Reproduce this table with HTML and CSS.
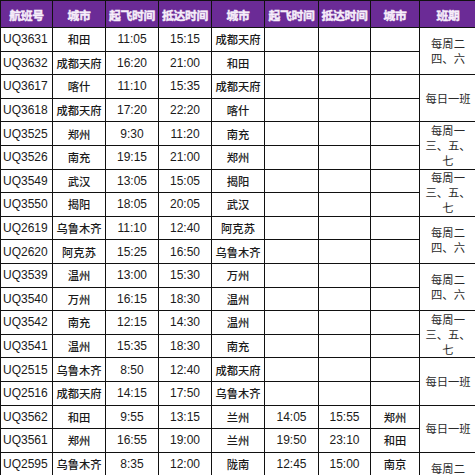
FILE: index.html
```html
<!DOCTYPE html>
<html lang="zh">
<head>
<meta charset="utf-8">
<title>航班时刻表</title>
<link rel="stylesheet" href="styles.css">
</head>
<body>
<table class="sched">
  <colgroup>
    <col class="c-no"><col class="c-city"><col class="c-t"><col class="c-t"><col class="c-city">
    <col class="c-t2"><col class="c-t3"><col class="c-city3"><col class="c-per">
  </colgroup>
  <thead>
    <tr class="head">
      <th>航班号</th><th>城市</th><th>起飞时间</th><th>抵达时间</th><th>城市</th><th>起飞时间</th><th>抵达时间</th><th>城市</th><th>班期</th>
    </tr>
  </thead>
  <tbody>
    <tr><td class="no">UQ3631</td><td class="cn">和田</td><td>11:05</td><td>15:15</td><td class="cn">成都天府</td><td></td><td></td><td></td><td class="per" rowspan="2">每周二<br>四、六</td></tr>
    <tr><td class="no">UQ3632</td><td class="cn">成都天府</td><td>16:20</td><td>21:00</td><td class="cn">和田</td><td></td><td></td><td></td></tr>
    <tr><td class="no">UQ3617</td><td class="cn">喀什</td><td>11:10</td><td>15:35</td><td class="cn">成都天府</td><td></td><td></td><td></td><td class="per" rowspan="2">每日一班</td></tr>
    <tr><td class="no">UQ3618</td><td class="cn">成都天府</td><td>17:20</td><td>22:20</td><td class="cn">喀什</td><td></td><td></td><td></td></tr>
    <tr><td class="no">UQ3525</td><td class="cn">郑州</td><td>9:30</td><td>11:20</td><td class="cn">南充</td><td></td><td></td><td></td><td class="per" rowspan="2">每周一<br>三、五、<br>七</td></tr>
    <tr><td class="no">UQ3526</td><td class="cn">南充</td><td>19:15</td><td>21:00</td><td class="cn">郑州</td><td></td><td></td><td></td></tr>
    <tr><td class="no">UQ3549</td><td class="cn">武汉</td><td>13:05</td><td>15:05</td><td class="cn">揭阳</td><td></td><td></td><td></td><td class="per" rowspan="2">每周一<br>三、五、<br>七</td></tr>
    <tr><td class="no">UQ3550</td><td class="cn">揭阳</td><td>18:05</td><td>20:05</td><td class="cn">武汉</td><td></td><td></td><td></td></tr>
    <tr><td class="no">UQ2619</td><td class="cn">乌鲁木齐</td><td>11:10</td><td>12:40</td><td class="cn">阿克苏</td><td></td><td></td><td></td><td class="per" rowspan="2">每周二<br>四、六</td></tr>
    <tr><td class="no">UQ2620</td><td class="cn">阿克苏</td><td>15:25</td><td>16:50</td><td class="cn">乌鲁木齐</td><td></td><td></td><td></td></tr>
    <tr><td class="no">UQ3539</td><td class="cn">温州</td><td>13:00</td><td>15:30</td><td class="cn">万州</td><td></td><td></td><td></td><td class="per" rowspan="2">每周二<br>四、六</td></tr>
    <tr><td class="no">UQ3540</td><td class="cn">万州</td><td>16:15</td><td>18:30</td><td class="cn">温州</td><td></td><td></td><td></td></tr>
    <tr><td class="no">UQ3542</td><td class="cn">南充</td><td>12:15</td><td>14:30</td><td class="cn">温州</td><td></td><td></td><td></td><td class="per" rowspan="2">每周一<br>三、五、<br>七</td></tr>
    <tr><td class="no">UQ3541</td><td class="cn">温州</td><td>15:35</td><td>18:30</td><td class="cn">南充</td><td></td><td></td><td></td></tr>
    <tr><td class="no">UQ2515</td><td class="cn">乌鲁木齐</td><td>8:50</td><td>12:40</td><td class="cn">成都天府</td><td></td><td></td><td></td><td class="per" rowspan="2">每日一班</td></tr>
    <tr><td class="no">UQ2516</td><td class="cn">成都天府</td><td>14:15</td><td>17:50</td><td class="cn">乌鲁木齐</td><td></td><td></td><td></td></tr>
    <tr><td class="no">UQ3562</td><td class="cn">和田</td><td>9:55</td><td>13:15</td><td class="cn">兰州</td><td>14:05</td><td>15:55</td><td class="cn">郑州</td><td class="per" rowspan="2">每日一班</td></tr>
    <tr><td class="no">UQ3561</td><td class="cn">郑州</td><td>16:55</td><td>19:00</td><td class="cn">兰州</td><td>19:50</td><td>23:10</td><td class="cn">和田</td></tr>
    <tr><td class="no">UQ2595</td><td class="cn">乌鲁木齐</td><td>8:35</td><td>12:00</td><td class="cn">陇南</td><td>12:45</td><td>15:00</td><td class="cn">南京</td><td class="per" rowspan="2">每周二<br>四、六</td></tr>
    <tr><td class="no"></td><td></td><td></td><td></td><td></td><td></td><td></td><td></td></tr>
  </tbody>
</table>
</body>
</html>
```

FILE: styles.css
```css
html, body {
  margin: 0;
  padding: 0;
  background: #ffffff;
  overflow: hidden;
}

.sched {
  border-collapse: collapse;
  table-layout: fixed;
  width: 476px;
  font-family: "Liberation Sans", Arial, "Noto Sans CJK SC", sans-serif;
  font-size: 12px;
  color: #1a1a1a;
}

.c-no { width: 52px; }
.c-city { width: 53px; }
.c-t { width: 53px; }
.c-t2 { width: 54px; }
.c-t3 { width: 52px; }
.c-city3 { width: 49px; }
.c-per { width: 57px; }

.sched th,
.sched td {
  border: 1px solid #111111;
  padding: 0;
  text-align: center;
  vertical-align: middle;
  white-space: nowrap;
  overflow: hidden;
}

.head {
  height: 27px;
}

.head th {
  background: #6b2b96;
  color: #f6eefa;
  font-family: "Noto Sans CJK SC", sans-serif;
  font-weight: 700;
  font-size: 11.8px;
  letter-spacing: -0.3px;
  -webkit-text-stroke: 0.45px #f6eefa;
}

.sched tbody tr {
  height: 23.6px;
}

.sched td.no {
  text-align: left;
  padding-left: 2px;
  font-size: 12px;
}

.sched td.cn {
  font-family: "Noto Sans CJK SC", sans-serif;
  font-weight: 500;
  font-size: 11.3px;
}

.sched td.per {
  font-family: "Noto Sans CJK SC", sans-serif;
  font-size: 11.3px;
  line-height: 15px;
  color: #2a2a2a;
  white-space: normal;
}
```
